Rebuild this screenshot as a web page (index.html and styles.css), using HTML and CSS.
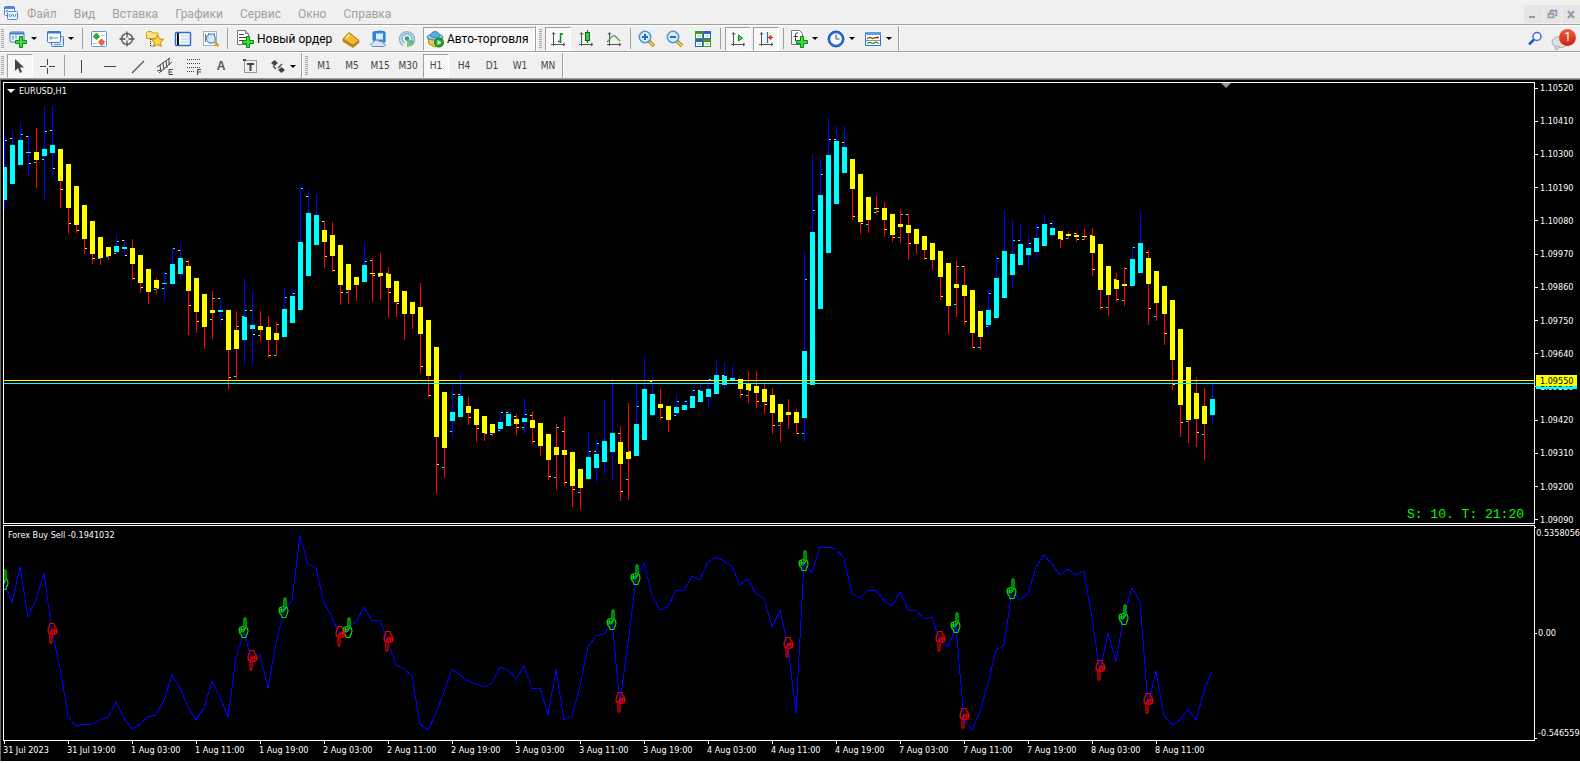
FILE: index.html
```html
<!DOCTYPE html>
<html lang="ru">
<head>
<meta charset="utf-8">
<title>EURUSD,H1</title>
<link rel="stylesheet" href="styles.css">
</head>
<body>
<header class="menubar">
  <svg class="app-icon" width="16" height="16" viewBox="0 0 16 16"><rect x="1.500" y="1.500" width="10" height="9" rx="1" fill="#fff" stroke="#4a86e0"/><path d="M1 3h11" stroke="#4a86e0" stroke-width="2"/><rect x="4.500" y="6.500" width="10" height="8" rx="1" fill="#eef5ff" stroke="#4a86e0"/><path d="M6 9l1.500 3 2-3 2 3 1.500-3M3 7l1-2 1 1" fill="none" stroke="#4a86e0"/></svg>
  <nav class="menu">
    <button>Файл</button><button>Вид</button><button>Вставка</button><button>Графики</button><button>Сервис</button><button>Окно</button><button>Справка</button>
  </nav>
  <div class="window-buttons">
    <button aria-label="Свернуть"><svg width="18" height="18"><path d="M5 12h6" stroke="#8c9bad" stroke-width="2"/></svg></button>
    <button aria-label="Восстановить"><svg width="18" height="18"><path d="M7.500 8V5.500h6v5h-2M7 6h7" fill="none" stroke="#8c9bad" stroke-width="1.500"/><path d="M5.500 8.500h5v4h-5zM5 9h6" fill="none" stroke="#8c9bad" stroke-width="1.500"/></svg></button>
    <button aria-label="Закрыть"><svg width="18" height="18"><path d="M6 6l6 7M12 6l-6 7" stroke="#8c9bad" stroke-width="2"/></svg></button>
  </div>
</header>

<div class="toolbars">
  <div class="toolbar toolbar-main">
    <i class="grip"></i>
    <button class="tool drop" aria-label="Новый график"><svg width="20" height="20"><rect x="2" y="3" width="14" height="10" rx="1" fill="#f4faff" stroke="#3b7cc4"/><path d="M2 4.500h14" stroke="#3b7cc4" stroke-width="2"/><path d="M5 7v4M4 8h2M8 6v4" stroke="#5c8fc0"/><use href="#plus"/></svg></button>
    <button class="tool drop" aria-label="Профили"><svg width="20" height="20"><rect x="6.500" y="7.500" width="12" height="10" rx="1" fill="#dcebfa" stroke="#3b7cc4"/><rect x="2.500" y="2.500" width="13" height="11" rx="1" fill="#f4faff" stroke="#3b7cc4"/><path d="M2 3.500h14" stroke="#3b7cc4" stroke-width="2"/><path d="M4 9h9M6 7v4M9 15.500h7" stroke="#6d9ccc"/></svg></button>
    <i class="sep"></i>
    <button class="tool" aria-label="Обзор рынка"><svg width="20" height="20"><rect x="2.500" y="2.500" width="15" height="15" rx="1" fill="#fff" stroke="#5a9ae0"/><path d="M4 5.500h1M4 8.500h1M12 6.500h4M14 15.500h2M4 14.500h4" stroke="#bbb"/><path d="M7.500 4l3 3.500-3 3-3-3z" fill="#2bb52b" stroke="#0b7d13" stroke-width=".7"/><path d="M12.500 16.500l-3-3.500 3-3 3 3z" fill="#f26a3a" stroke="#b52b10" stroke-width=".7"/></svg></button>
    <button class="tool" aria-label="Окно данных"><svg width="20" height="20"><circle cx="10" cy="10" r="5.500" fill="none" stroke="#666" stroke-width="1.500"/><path d="M10 2.500v6M10 11.500v6M2.500 10h6M11.500 10h6" stroke="#555" stroke-width="1.300"/></svg></button>
    <button class="tool" aria-label="Навигатор"><svg width="20" height="20"><path d="M1.500 9.500V3.500l1-1h4l1 1.500h5.500v5.500z" fill="#fbe27a" stroke="#d0a020"/><path d="M5.500 10v7h4" fill="none" stroke="#222" stroke-dasharray="1 1"/><path d="M12.500 6l1.900 3.800 4.100.6-3 3 .7 4.100-3.700-2-3.700 2 .7-4.100-3-3 4.100-.6z" fill="#ffd34a" stroke="#c08a10"/></svg></button>
    <button class="tool" aria-label="Терминал"><svg width="20" height="20"><rect x="2.500" y="3.500" width="15" height="13" rx="1" fill="#f6faff" stroke="#2f6fc0" stroke-width="1.500"/><path d="M5 4v12" stroke="#111" stroke-width="2"/><path d="M8 7h8M8 10h8M8 13h8" stroke="#b9cbe8"/><path d="M5 6h1" stroke="#e22"/></svg></button>
    <button class="tool" aria-label="Тестер стратегий"><svg width="20" height="20"><rect x="2.500" y="2.500" width="13" height="14" fill="#fff" stroke="#a8b0b8"/><path d="M4.500 5v8M7.500 4v5M13.500 4v6M4 7.500h3" stroke="#777"/><circle cx="10" cy="9.500" r="4.500" fill="#cfe8fb" fill-opacity=".85" stroke="#5a9bd0" stroke-width="1.300"/><path d="M13.500 13l4 4" stroke="#d9a520" stroke-width="2.500"/></svg></button>
    <i class="sep"></i>
    <button class="tool text-tool order"><svg width="20" height="20"><path d="M2.500 1.500h8l3 3v11h-11z" fill="#fff" stroke="#777"/><path d="M10.500 1.500v3h3" fill="#ddd" stroke="#777"/><path d="M4 5.500h5M4 8.500h7M4 11.500h4" stroke="#444"/><use href="#plus"/></svg>Новый ордер</button>
    <button class="tool" aria-label="MetaEditor"><svg width="20" height="20"><path d="M2 10l6-6.500 10 8-6 5z" fill="#f2b933" stroke="#a8700a"/><path d="M2 10.500l10 6 6-5v2l-6 5-10-6z" fill="#c98512" stroke="#a8700a" stroke-width=".6"/><path d="M5 9.500l3.500-4" stroke="#fff0a0" stroke-width="1.500"/></svg></button>
    <button class="tool" aria-label="Виртуальный хостинг"><svg width="20" height="20"><path d="M4 3l8-1 4 1v10H6l-2-2z" fill="#2f86dd" stroke="#1b78d8"/><path d="M7 4.500h7v6H7z" fill="#d8eeff"/><path d="M4 17.500c-3-.5-2.500-4 .5-4 .8-3 5-3 6-.8 2-1 4 .3 3.700 1.800 3 .2 2.800 3-.2 3z" fill="#dbe5f2" stroke="#6f8fbe"/></svg></button>
    <button class="tool" aria-label="Сигналы"><svg width="20" height="20"><g fill="none" stroke-width="1.500"><path d="M6 16.500a7.500 7.500 0 1 1 8 0" stroke="#8fb3d8"/><path d="M7.500 14a5 5 0 1 1 5 0" stroke="#7cb7c0"/></g><circle cx="10" cy="9.500" r="2.300" fill="#3d8ec0"/><path d="M10 10v8c5 0 7-4 7.500-6z" fill="#4bb562" fill-opacity=".75"/></svg></button>
    <button class="tool text-tool auto pressed"><svg width="20" height="20"><path d="M3 9l1 6 6 3 7-3V9z" fill="#f3c73c" stroke="#b48a17"/><ellipse cx="10" cy="8" rx="8" ry="3" fill="#8fc9ee" stroke="#3a83b8"/><path d="M5.500 7c0-6 9-6 9 0-3 2-6 2-9 0z" fill="#5aaee0" stroke="#3a83b8"/><circle cx="14" cy="13.500" r="4.500" fill="#1ea82a" stroke="#0a7815"/><path d="M12.500 11l4 2.500-4 2.500z" fill="#fff"/></svg>Авто-торговля</button>
    <i class="sep edge"></i>
    <i class="grip"></i>
    <button class="tool pressed" aria-label="Бары"><svg width="20" height="20"><use href="#axes"/><path d="M12.500 4v10M12.500 5H15M10 12.500h2.500" stroke="#0b8a15" stroke-width="1.500" fill="none"/></svg></button>
    <button class="tool" aria-label="Свечи"><svg width="20" height="20"><use href="#axes"/><path d="M11.500 1v13" stroke="#0b6a12"/><rect x="9.500" y="3.500" width="4" height="8" fill="#35d045" stroke="#0b6a12"/></svg></button>
    <button class="tool" aria-label="Линия"><svg width="20" height="20"><use href="#axes"/><path d="M3 13c4-3 5-8 8-6l5 5" stroke="#43a043" stroke-width="1.300" fill="none"/></svg></button>
    <i class="sep"></i>
    <button class="tool" aria-label="Увеличить"><svg width="20" height="20"><use href="#lens"/><path d="M5 8h6M8 5v6" stroke="#2a6fb5" stroke-width="2"/></svg></button>
    <button class="tool" aria-label="Уменьшить"><svg width="20" height="20"><use href="#lens"/><path d="M5 8h6" stroke="#2a6fb5" stroke-width="2"/></svg></button>
    <button class="tool" aria-label="Окна мозаикой"><svg width="20" height="20"><path d="M2 2h8v8H2z" fill="#3f9b22"/><path d="M10 2h8v8h-8z" fill="#2c62cc"/><path d="M2 10h8v8H2z" fill="#2c62cc"/><path d="M10 10h8v8h-8z" fill="#3f9b22"/><path d="M3 5h6v4H3zM11 5h6v4h-6zM3 13h6v4H3zM11 13h6v4h-6z" fill="#fff"/><path d="M4 7h4M12 7h4M4 15h4M12 15h4" stroke="#9bb"/></svg></button>
    <i class="sep wide"></i>
    <button class="tool pressed" aria-label="Автопрокрутка"><svg width="20" height="20"><use href="#axes"/><path d="M10.500 6l4 3-4 3z" fill="#45d055" stroke="#0b8a15"/></svg></button>
    <button class="tool pressed" aria-label="Сдвиг графика"><svg width="20" height="20"><use href="#axes"/><path d="M11.500 3v11" stroke="#2a6fb5" stroke-width="1.300"/><path d="M17 8.500h-4M15 6.500l-2.500 2 2.500 2z" fill="#c63c10" stroke="#c63c10"/></svg></button>
    <i class="sep wide"></i>
    <button class="tool drop" aria-label="Индикаторы"><svg width="20" height="20"><path d="M2.500 1.500h8l3 3v11h-11z" fill="#fff" stroke="#777"/><path d="M9 4c-2-.5-2.500.5-2.500 2v6M4.500 7.500H9" fill="none" stroke="#444"/><use href="#plus"/></svg></button>
    <button class="tool drop" aria-label="Периоды"><svg width="20" height="20"><circle cx="10" cy="10" r="7" fill="#f7fbff" stroke="#2a6fd0" stroke-width="2.500"/><circle cx="10" cy="10" r="8" fill="none" stroke="#1c4fa0" stroke-width=".7"/><path d="M10 5.500V10h3.500" fill="none" stroke="#444"/></svg></button>
    <button class="tool drop" aria-label="Шаблоны"><svg width="20" height="20"><rect x="2.500" y="3.500" width="15" height="13" fill="#fff" stroke="#2f78c8"/><path d="M2 4.500h16" stroke="#5aa0e8" stroke-width="3"/><path d="M4 9.500l3-1 3 1 3-1h3" fill="none" stroke="#a02a10" stroke-width="1.300"/><path d="M3 11.500h14" stroke="#999"/><path d="M4 14.500l3-1 3 1 3-1.500 3 1.500" fill="none" stroke="#1f9a2a" stroke-width="1.300"/></svg></button>
    <i class="sep edge"></i>
    <div class="toolbar-right">
      <button class="plain" aria-label="Поиск"><svg width="16" height="16"><circle cx="10" cy="5.500" r="4" fill="#f4f8ff" stroke="#3a6fe0" stroke-width="1.500"/><path d="M7 8.500l-5 5" stroke="#2a55c8" stroke-width="2.500"/></svg></button>
      <button class="plain chat" aria-label="Уведомления"><svg width="18" height="18"><ellipse cx="9" cy="9" rx="8" ry="5.500" fill="#dcdee2" stroke="#a8abb2"/><path d="M4 13l1 4 4-3z" fill="#dcdee2" stroke="#a8abb2"/></svg><span class="badge">1</span></button>
    </div>
  </div>

  <div class="toolbar toolbar-line">
    <i class="grip"></i>
    <button class="tool pressed" aria-label="Курсор"><svg width="20" height="20"><path d="M5 3v12l3-3 2 5 2-1-2-4.500h4z" fill="#444"/></svg></button>
    <button class="tool" aria-label="Перекрестие"><svg width="20" height="20"><path d="M9.500 3v6M9.500 12v6M2 10.500h6M11 10.500h6" stroke="#444"/></svg></button>
    <i class="sep"></i>
    <button class="tool" aria-label="Вертикальная линия"><svg width="20" height="20"><path d="M10.500 4v13" stroke="#444"/></svg></button>
    <button class="tool" aria-label="Горизонтальная линия"><svg width="20" height="20"><path d="M5 10.500h12" stroke="#444"/></svg></button>
    <button class="tool" aria-label="Трендовая линия"><svg width="20" height="20"><path d="M5 17L17 5" stroke="#555" stroke-width="1.300"/></svg></button>
    <button class="tool" aria-label="Канал"><svg width="20" height="20"><path d="M2 11L15 2M4 17L17 6M5 9l1 7M8 7l1 7M11 5l1 7M14 2v7M2 15l4-1" stroke="#444" fill="none"/><path d="M18 13.500h-4v5h4M14 16h3" stroke="#444" fill="none"/></svg></button>
    <button class="tool" aria-label="Фибоначчи"><svg width="20" height="20"><path d="M4 3.500h14M4 7.500h14M4 11.500h14M4 15.500h8" stroke="#444" stroke-dasharray="1 1"/><path d="M14.500 19v-5.500H18M14.500 16H18" stroke="#444" fill="none"/></svg></button>
    <button class="tool" aria-label="Текст"><span class="letter">A</span></button>
    <button class="tool" aria-label="Метка"><svg width="20" height="20"><rect x="5.500" y="4.500" width="12" height="12" fill="none" stroke="#444" stroke-dasharray="1 1"/><path d="M8 8h7M11.500 8v7" stroke="#444" stroke-width="2"/><path d="M4 4h3" stroke="#444" stroke-width="2"/></svg></button>
    <button class="tool drop arrows" aria-label="Стрелки"><svg width="20" height="20"><path d="M3 7l3.500-3L10 7 6.500 10zM10 14l3.500-3L17 14l-3.500 3z" fill="#444"/><path d="M5 10l3 3M10 12l4-4" stroke="#444" stroke-width="1.300"/></svg></button>
    <i class="sep edge"></i>
    <i class="grip"></i>
    <button class="tool">M1</button><button class="tool">M5</button><button class="tool">M15</button><button class="tool">M30</button><button class="tool pressed">H1</button><button class="tool">H4</button><button class="tool">D1</button><button class="tool">W1</button><button class="tool">MN</button>
    <i class="sep edge"></i>
  </div>
</div>

<main class="chart">
  <section class="plot price-plot">
    <svg class="drawing"><g id="candles" transform="translate(-4,-83)" shape-rendering="crispEdges"></g>
      <g shape-rendering="crispEdges"><rect y="297" width="100%" height="1" fill="#ff0"/><rect y="300" width="100%" height="1" fill="#0ff"/></g>
      <path d="M1217 0h10l-5 5z" fill="#8a97a5"/>
    </svg>
    <h1 class="plot-title symbol">EURUSD,H1</h1>
    <p class="timer">S: 10. T: 21:20</p>
  </section>
  <ol class="axis price-axis">
    <li>1.10520</li><li>1.10410</li><li>1.10300</li><li>1.10190</li><li>1.10080</li><li>1.09970</li><li>1.09860</li><li>1.09750</li><li>1.09640</li><li>1.09530<span class="tag bid">1.09540</span><span class="tag ask">1.09550</span></li><li>1.09420</li><li>1.09310</li><li>1.09200</li><li>1.09090</li>
  </ol>
  <section class="plot indicator-plot">
    <svg class="drawing"><g id="indicator" transform="translate(-4,-526)"></g></svg>
    <h2 class="plot-title">Forex Buy Sell -0.1941032</h2>
  </section>
  <ol class="axis indicator-axis"><li>0.5358056</li><li>0.00</li><li>-0.546559</li></ol>
  <ol class="time-axis">
    <li>31 Jul 2023</li><li>31 Jul 19:00</li><li>1 Aug 03:00</li><li>1 Aug 11:00</li><li>1 Aug 19:00</li><li>2 Aug 03:00</li><li>2 Aug 11:00</li><li>2 Aug 19:00</li><li>3 Aug 03:00</li><li>3 Aug 11:00</li><li>3 Aug 19:00</li><li>4 Aug 03:00</li><li>4 Aug 11:00</li><li>4 Aug 19:00</li><li>7 Aug 03:00</li><li>7 Aug 11:00</li><li>7 Aug 19:00</li><li>8 Aug 03:00</li><li>8 Aug 11:00</li>
  </ol>
</main>

<svg class="defs" width="0" height="0">
  <defs>
    <g id="plus"><path d="M11.500 7.500h3v4h4v3h-4v4h-3v-4h-4v-3h4z" fill="#3ddc3d" stroke="#0a8a14"/></g>
    <g id="axes"><path d="M5.500 4v13M3 15.500h13M4 5.500l1.500-2 1.500 2M15 14l2 1.500-2 1.500" fill="none" stroke="#555"/></g>
    <g id="lens"><path d="M12 12l5 5" stroke="#b8860b" stroke-width="3.500"/><path d="M12.500 12.500l4.500 4.500" stroke="#f7d560" stroke-width="1.500"/><circle cx="8" cy="8" r="5.700" fill="#d4ecff" stroke="#4f94d4" stroke-width="1.500"/></g>
    <g id="hand" fill="none" stroke-width="1.200"><path d="M6 12V2Q7-.5 8 2V9.500Q10 11 10 14 9.500 17 8.500 18L8 20.500H4L3.500 18Q1.500 17 1.500 14.500"/><path d="M6 9.500Q3 9.500 1.500 11 .5 13 1.500 15H4.500Q6.500 14.500 7 12M3.500 10.500V14.500M1.500 12.800H6M8 10L6 14"/></g>
  </defs>
</svg>
<script src="chart.js"></script>
</body>
</html>
```

FILE: styles.css
```css
* { box-sizing: border-box; }
body {
  margin: 0;
  height: 100vh;
  display: flex;
  flex-direction: column;
  overflow: hidden;
  background: #fff;
  font: 12px/16px Roboto, "Noto Sans", sans-serif;
  color: #000;
}
button { border: 0; padding: 0; margin: 0; background: none; font: inherit; color: inherit; }
ol { list-style: none; margin: 0; padding: 0; }
h1, h2, p { margin: 0; font-weight: normal; }
.defs { position: absolute; }

.menubar {
  display: flex;
  align-items: center;
  height: 25px;
  padding: 4px 0 0 3px;
  background: #f0f0f0;
  border-bottom: 1px solid #a0a0a0;
}
.app-icon { margin-bottom: 2px; }
.menu { display: flex; flex: 1; gap: 17px; padding: 0 0 0 8px; color: #a0a0a0; }
.window-buttons { display: flex; gap: 1px; }
.window-buttons button { width: 18px; height: 18px; background: #e5e5e5; }
.window-buttons svg { display: block; }

.toolbars { background: #f0f0f0; border-bottom: 1px solid #696969; }
.toolbar { display: flex; align-items: center; height: 27px; border-top: 1px solid #fff; border-bottom: 1px solid #a0a0a0; }
.grip {
  width: 3px;
  height: 20px;
  margin: 0 2px 0 1px;
  background: repeating-linear-gradient(#a6a6a6 0 1px, #f0f0f0 1px 2px);
}
.sep { width: 1px; height: 21px; margin: 0 2px; background: #a0a0a0; }
.sep.wide { margin: 0 3px; }
.sep.edge { height: 100%; width: 2px; margin: 0 1px 0 0; border-right: 1px solid #fff; }
.tool {
  display: flex;
  align-items: center;
  justify-content: center;
  flex: none;
  width: 28px;
  height: 24px;
}
.tool.drop { width: 37px; justify-content: flex-start; padding-left: 2px; gap: 3px; }
.tool.drop::after { content: ""; border: 3px solid transparent; border-top-color: #000; border-bottom: 0; }
.text-tool.tool { justify-content: flex-start; gap: 2px; }
.order { width: 107px; padding-left: 5px; }
.auto { width: 112px; padding-left: 1px; margin-left: 2px; }
.pressed {
  border: 1px solid;
  border-color: #a0a0a0 #fff #fff #a0a0a0;
  background: repeating-conic-gradient(#fff 0 25%, #f0f0f0 0 50%) 0 0 / 2px 2px;
}
.tool.pressed:not(.auto) { width: 26px; margin: 0 1px; }
.toolbar-line { font: 10px/14px "DejaVu Sans Condensed", "DejaVu Sans", sans-serif; color: #444; }
.toolbar-line .tool { padding-top: 1px; }
.toolbar-line .arrows { width: 38px; padding-left: 5px; gap: 2px; }
.letter { font: bold 12px/16px "Liberation Sans", sans-serif; color: #555; }
.toolbar-right { display: flex; gap: 8px; margin-left: auto; padding-right: 3px; }
.plain { position: relative; }
.plain svg { display: block; }
.chat { width: 26px; padding-top: 6px; }
.badge {
  position: absolute;
  top: 2px;
  right: 1px;
  width: 17px;
  height: 17px;
  border-radius: 50%;
  background: linear-gradient(#e8603f, #d21f0c);
  color: #fff;
  text-align: center;
}

.chart {
  flex: 1;
  min-height: 0;
  display: grid;
  grid-template-columns: minmax(0, 1fr) 45px;
  grid-template-rows: 442fr 216fr 19px;
  row-gap: 1px;
  margin-bottom: 2px;
  padding: 2px 0 0 2px;
  background: #000;
  border-left: 1px solid #696969;
  color: #fff;
  font: 9px/12px "DejaVu Sans Condensed", "DejaVu Sans", sans-serif;
  overflow: hidden;
}
.plot { position: relative; border: 1px solid #fff; min-height: 0; overflow: hidden; }
.drawing { position: absolute; inset: 0; width: 100%; height: 100%; }
.plot-title { position: relative; font-size: 9px; padding: 3px 4px; }
.symbol { display: flex; align-items: center; gap: 4px; padding: 2px 3px; }
.symbol::before { content: ""; border: 4px solid transparent; border-top-color: #fff; border-bottom: 0; }
.timer {
  position: absolute;
  right: 10px;
  bottom: 0;
  color: #0f0;
  font: 13px/16px "Liberation Mono", monospace;
}
.axis { display: flex; flex-direction: column; justify-content: space-between; white-space: nowrap; }
.axis li { position: relative; display: flex; align-items: center; height: 12px; gap: 2px; }
.axis li::before { content: ""; width: 3px; height: 1px; background: #fff; }
.price-axis { margin: 0 0 -2px; }
.indicator-axis { margin: 2px 0; }
.indicator-axis li { gap: 1px; }
.indicator-axis li::before { width: 2px; }
.indicator-axis li:first-child::before { align-self: flex-start; }
.indicator-axis li:last-child::before { align-self: flex-end; }
.tag { position: absolute; left: 1px; width: 41px; height: 11px; padding-left: 4px; line-height: 12px; color: #000; }
.bid { top: -3px; background: #0ff; }
.ask { top: -6px; background: #ff0; }
.time-axis { grid-column: 1 / -1; display: flex; margin-top: -1px; }
.time-axis li { flex: none; width: 64px; }
.time-axis li::before { content: ""; display: block; width: 1px; height: 3px; margin-left: 1px; background: #fff; }
```

FILE: chart.js
```js
const NS = "http://www.w3.org/2000/svg";
const STEP = 8, FIRST = 4;

function add(parent, name, attrs) {
  const el = document.createElementNS(NS, name);
  for (const key in attrs) el.setAttribute(key, attrs[key]);
  parent.appendChild(el);
}

// colour, wick top, wick bottom, body top, body bottom, then ticks: side + colour + level
const bars = `
c 135 210 167 200 rc140|c 131 184 145 184 ly138|c 123 165 140 165 rc134|c 135 175 152 153 ly136 ry163|y 128 188 152 160 lc162
c 106 201 149 156 rc131 lc159|c 106 178 145 153 ly130 ry168|y 149 208 149 181 ry189|y 164 234 164 208 ry223|y 186 233 186 225 ry230
y 205 254 205 239 ry248|y 221 264 221 254 ry258|y 237 265 237 258 lc258|y 247 260 247 256 lc256|c 235 254 246 252 rc241 lc253
c 240 256 247 249 ly240 ry255|y 239 280 248 264 ry278|y 255 293 255 283 ry287|y 269 304 269 292|y 278 294 280 288 lc289 rc288
c 272 300 283 284 rc273 lc288|c 248 286 264 284 rc248|c 243 280 258 274 ly250|y 260 335 266 291 ly261 ry305|y 278 333 278 312 ry321
y 294 349 294 327|y 291 339 310 313 rc298 lc319|c 298 325 310 312 ly298 ry319|y 310 390 310 350 ry377|y 311 379 330 349 rc326 lc376
c 278 364 317 340 rc310 lc316|c 291 364 325 329 ly310 ry334|y 311 342 326 330 lc335|y 316 358 327 340 ry355|y 322 356 333 340 rc324 lc355
c 289 337 309 337 rc297|c 289 323 296 323 rc293|c 185 310 242 310 rc188|c 189 276 213 276 ly196|c 194 245 215 245
y 221 268 230 242 ly221 ry256|y 222 272 235 256 ry270|y 245 305 245 285 ry292|y 264 304 264 290 lc292|y 277 301 277 285
c 243 282 265 282 rc261|y 258 302 273 274 ly260 ry275|y 253 300 273 276 lc276|y 267 318 274 288 ry292 ly273|y 281 317 281 302 ry303
y 291 340 291 314|y 302 329 302 314|y 283 374 307 334 ry366|y 320 397 320 376 ry395|y 347 494 347 437 ry464
y 392 478 392 448 lc467|c 387 437 412 421 rc394 lc431|c 373 417 396 417 ly394|y 397 425 406 413 ry417|y 409 442 409 425 ry428
y 416 441 416 433 ry433|y 424 437 424 433 lc434|c 412 432 422 429 rc412 lc430|c 409 426 414 426 ly412|y 414 435 419 424 ly416 ry427
c 398 434 418 422 rc414 lc427|y 411 444 420 428 ly415 ry441|y 423 456 423 446|y 434 480 434 460 ry476|y 424 490 447 455 rc427 lc477
y 417 486 450 455 ly431 ry482|y 452 507 452 486 ry489|y 469 510 469 488 lc492|c 431 479 457 479 rc451|c 439 483 454 468 rc443 lc451
c 400 475 441 462|c 378 481 433 452|y 426 501 442 464 ly433 ry491|y 403 500 452 459 rc451 lc479|c 384 457 424 456 rc406
c 357 440 389 440|c 375 416 394 415 ly381|y 389 420 404 408 ry417|y 406 432 406 420|c 395 416 407 413 rc401 lc415
c 401 411 405 410 rc401|c 389 408 396 408 rc390|c 385 402 391 402 ly390|c 379 407 389 397 rc379|c 361 394 375 394
c 362 389 376 385 ly375|c 365 385 378 380|y 379 398 379 389 ry394|y 371 403 383 390 lc395 rc390|y 371 408 386 393 ry401
y 384 414 389 402 ry404|y 388 434 395 413 ry425|y 404 442 404 422 lc425|y 399 429 412 415|y 409 434 412 423 ry433
c 252 442 351 418 lc433 rc279|c 154 385 232 385 rc210|c 159 309 195 309 rc174|c 118 253 155 253 rc139|c 126 204 141 204 ly139
c 126 173 147 173 ly142|y 159 220 159 189 ry216|y 174 234 174 222 ry223|y 197 233 197 220 lc224|y 196 215 208 209 lc212 rc211
y 202 237 208 220 ry229|y 214 242 214 235 ry237|y 209 243 224 227 rc214 lc237|y 214 260 225 233 ly214 ry243|y 229 254 229 244
y 236 260 236 250 ry258|y 243 270 243 260|y 251 300 251 277 ry296|y 263 334 263 306|y 261 317 284 288 rc266 lc304
y 266 325 285 296 ly266 ry321|y 290 348 290 333 ry347|y 311 350 311 337 lc347|c 290 331 310 325 rc293 lc326|c 256 318 278 318 rc258
c 210 298 251 298|c 220 288 254 275 rc240|c 225 265 244 265 ly240|c 235 269 248 255 rc243|c 224 259 238 252 rc227
c 214 246 224 246|c 220 237 228 235 ly223|y 231 248 231 239 ry239|y 231 239 234 236 lc238|y 233 242 235 237 ly233 ry239
y 229 240 236 237 lc239|y 228 276 236 253 ry269 ly235|y 244 310 244 290 ry307|y 266 316 266 295 lc307|y 273 302 280 289 ry299 ly279
y 267 306 284 286 rc268 lc300|c 247 286 259 286 rc247|c 212 273 243 273|y 250 325 258 284 ly252 ry308|y 271 321 271 303 lc316
y 286 345 286 314 ry333|y 300 390 300 360 ry384|y 329 437 329 405 ry422|y 367 443 367 420 lc421|y 377 447 393 419 ry432
y 388 460 406 424 lc434|c 382 423 399 415`.trim().split(/[|\n]/);

const fills = { c: "#0ff", y: "#ff0" };
const candles = document.getElementById("candles");
bars.forEach((bar, i) => {
  const [kind, high, low, top, bottom, ...ticks] = bar.split(" ");
  const x = FIRST + i * STEP;
  add(candles, "rect", { x, y: high, width: 1, height: low - high, fill: kind === "c" ? "#00f" : "#f00" });
  add(candles, "rect", { x: x - 2, y: top, width: 5, height: bottom - top, fill: fills[kind] });
  for (const t of ticks)
    add(candles, "rect", { x: t[0] === "l" ? x - 2 : x + 1, y: t.slice(2), width: 2, height: 1, fill: fills[t[1]] });
});

const levels = [
  582,603,567,617,600,573,632,667,716,726,724,724,720,717,702,718,729,724,717,715,700,675,688,707,720,708,681,697,717,658,
  632,662,654,688,643,612,600,536,564,568,603,617,636,627,622,607,621,620,642,665,669,676,724,730,713,692,669,675,681,684,
  687,683,667,670,679,666,689,688,715,670,720,716,686,647,636,634,622,703,643,579,563,595,610,607,590,590,576,580,562,557,
  561,566,585,579,594,598,627,610,646,713,563,573,547,547,549,558,594,598,590,590,601,606,592,610,610,619,617,642,647,627,
  720,730,712,683,650,645,591,600,594,567,555,564,575,569,575,571,618,672,633,661,615,588,602,704,671,715,725,720,709,720,
  691,671];
const indicator = document.getElementById("indicator");
add(indicator, "polyline", {
  points: levels.map((y, i) => `${FIRST + i * STEP},${y}`).join(" "),
  fill: "none", stroke: "#00f", "stroke-width": 1, "shape-rendering": "crispEdges"
});

const buys = { 0: 569, 30: 617, 35: 597, 43: 617, 76: 609, 79: 564, 100: 550, 119: 612, 126: 578, 140: 604 };
const sells = { 6: 622, 31: 649, 42: 625, 48: 630, 77: 691, 98: 636, 117: 630, 120: 707, 137: 659, 143: 692 };
for (const i in buys)
  add(indicator, "use", { href: "#hand", stroke: "#00e000", transform: `translate(${FIRST + i * STEP - 6} ${buys[i]})` });
for (const i in sells)
  add(indicator, "use", { href: "#hand", stroke: "#f00000", transform: `translate(${FIRST + i * STEP + 6} ${sells[i] + 22}) rotate(180)` });
```
